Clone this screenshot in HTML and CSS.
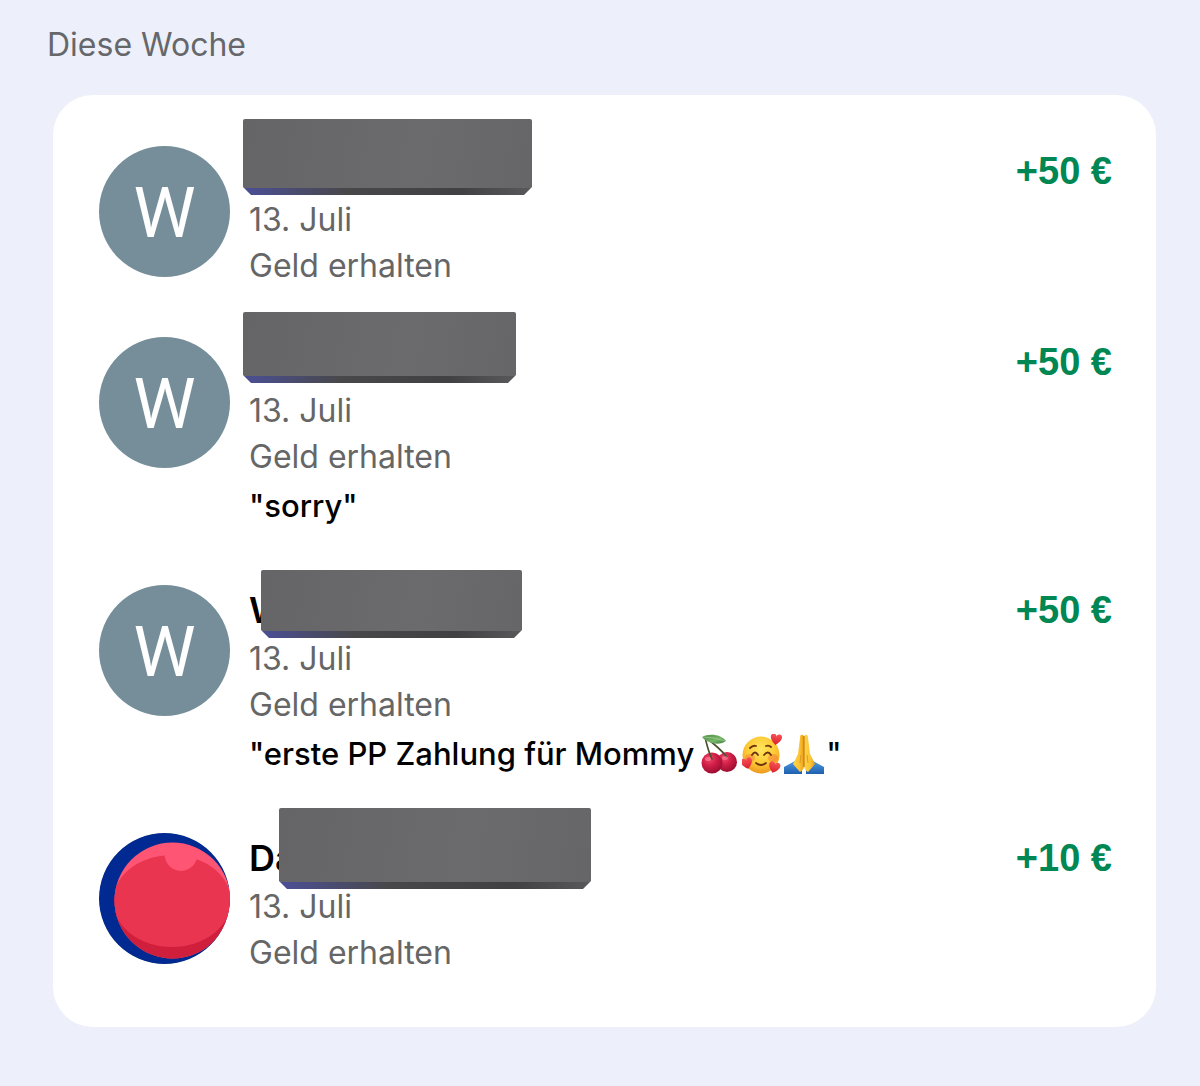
FILE: index.html
```html
<!DOCTYPE html>
<html lang="de">
<head>
<meta charset="utf-8">
<meta name="viewport" content="width=device-width, initial-scale=1">
<title>Aktivitäten</title>
<link rel="stylesheet" href="styles.css">
</head>
<body>
<main class="page">
  <h1 class="heading">Diese Woche</h1>
  <ul class="card">
    <li class="row">
      <div class="avatar">W</div>
      <div class="details">
        <div class="name"><span class="cover cover-a"></span></div>
        <div class="meta">13. Juli</div>
        <div class="meta">Geld erhalten</div>
      </div>
      <div class="amount">+50 €</div>
    </li>
    <li class="row">
      <div class="avatar">W</div>
      <div class="details">
        <div class="name"><span class="cover cover-b"></span></div>
        <div class="meta">13. Juli</div>
        <div class="meta">Geld erhalten</div>
        <div class="note">"sorry"</div>
      </div>
      <div class="amount">+50 €</div>
    </li>
    <li class="row">
      <div class="avatar">W</div>
      <div class="details">
        <div class="name">W<span class="cover cover-c"></span></div>
        <div class="meta">13. Juli</div>
        <div class="meta">Geld erhalten</div>
        <div class="note"><span>"erste PP Zahlung für Mommy</span>
          <span class="emojis">
            <svg class="emoji" viewBox="0 0 40 40" role="img" aria-label="Kirschen">
              <defs>
                <radialGradient id="cherry" cx=".38" cy=".3" r=".7"><stop offset="0" stop-color="#f0466a"/><stop offset=".5" stop-color="#cf1d45"/><stop offset="1" stop-color="#9c0f32"/></radialGradient>
                <linearGradient id="leaf" x2="1" y2="1"><stop offset="0" stop-color="#4c8a44"/><stop offset=".6" stop-color="#76b768"/><stop offset="1" stop-color="#3d7a3a"/></linearGradient>
              </defs>
              <circle cx="27" cy="28" r="10" fill="url(#cherry)"/>
              <circle cx="12" cy="29" r="10.500" fill="url(#cherry)"/>
              <path d="M5 3C7 12 9 19 12 25M5 3C13 9 22 17 27 23" fill="none" stroke="#47502a" stroke-width="1.600" stroke-linecap="round"/>
              <path d="M2 3C9-1 21 0 26 7C21 11 9 11 2 3Z" fill="url(#leaf)"/>
              <path d="M3 3Q14 3 25 7" fill="none" stroke="#a7d19b" stroke-width=".7"/>
              <ellipse cx="8" cy="25" rx="3" ry="2" fill="#ff8ca2" opacity=".6"/>
              <ellipse cx="25" cy="24" rx="3" ry="2" fill="#ff8ca2" opacity=".5"/>
            </svg>
            <svg class="emoji" viewBox="0 0 40 40" role="img" aria-label="Lächelndes Gesicht mit Herzen">
              <defs>
                <radialGradient id="face" cx=".5" cy=".35" r=".65"><stop offset="0" stop-color="#ffe65c"/><stop offset=".6" stop-color="#fdc935"/><stop offset="1" stop-color="#ee981e"/></radialGradient>
                <linearGradient id="heart" x2="0" y2="1"><stop offset="0" stop-color="#f75255"/><stop offset="1" stop-color="#d9202e"/></linearGradient>
                <path id="heart-shape" d="M0 5C-8-1-6-6-3-6C-1-6 0-5 0-3C0-5 1-6 3-6C6-6 8-1 0 5Z"/>
              </defs>
              <circle cx="19" cy="21" r="18.500" fill="url(#face)"/>
              <ellipse cx="8" cy="24" rx="5" ry="4" fill="#f47a3a" opacity=".5"/>
              <ellipse cx="31" cy="24" rx="5" ry="4" fill="#f47a3a" opacity=".5"/>
              <g fill="none" stroke="#6b3410" stroke-width="1.800" stroke-linecap="round">
                <path d="M8 14Q11 11 14 12M24 12Q27 11 29 13"/>
                <path d="M10 21Q13 16 16 21M22 21Q26 16 29 21"/>
                <path d="M14 29Q19 33 24 29"/>
              </g>
              <g fill="url(#heart)">
                <use href="#heart-shape" transform="translate(34 6) rotate(8)"/>
                <use href="#heart-shape" transform="translate(5 30) rotate(-14)"/>
                <use href="#heart-shape" transform="translate(32 34) rotate(16)"/>
              </g>
            </svg>
            <svg class="emoji" viewBox="0 0 40 40" role="img" aria-label="Gefaltete Hände">
              <defs>
                <linearGradient id="hand"><stop offset="0" stop-color="#ffd44d"/><stop offset=".6" stop-color="#fbc331"/><stop offset="1" stop-color="#e89b1b"/></linearGradient>
                <linearGradient id="sleeve" x2="0" y2="1"><stop offset="0" stop-color="#4c9be4"/><stop offset="1" stop-color="#1f5fae"/></linearGradient>
              </defs>
              <path d="M0 33L11 27L18 36V40H0Z" fill="url(#sleeve)"/>
              <path d="M40 33L29 27L22 36V40H40Z" fill="url(#sleeve)"/>
              <path d="M20 2C18 0 16 0 16 4L14 20L9 30L16 38Q20 36 20 31Z" fill="url(#hand)"/>
              <path d="M20 2C22 0 24 0 24 4L26 20L31 30L24 38Q20 36 20 31Z" fill="url(#hand)"/>
              <path d="M20 2V33" stroke="#c77d12" stroke-width="1.200" fill="none"/>
              <path d="M17 21L16 29M23 21L24 29" stroke="#df9a22" stroke-width="1" fill="none"/>
            </svg>
          </span><span>"</span></div>
      </div>
      <div class="amount">+50 €</div>
    </li>
    <li class="row">
      <svg class="avatar" viewBox="0 0 131 131" role="img" aria-label="Profilbild">
        <defs>
          <clipPath id="disc"><circle cx="65.500" cy="65.500" r="65.500"/></clipPath>
          <clipPath id="ball"><circle cx="73.500" cy="67.500" r="58"/></clipPath>
        </defs>
        <g clip-path="url(#disc)">
          <rect width="131" height="131" fill="#002991"/>
          <g clip-path="url(#ball)">
            <rect width="140" height="131" fill="#ff5574"/>
            <path d="M0 65H140V131H0Z" fill="#cf1f3c"/>
            <ellipse cx="73" cy="68" rx="59" ry="46" fill="#e9354f"/>
            <path d="M66 18A16 16 0 0 0 98 25Q90 16 66 15Z" fill="#ff5574"/>
          </g>
        </g>
      </svg>
      <div class="details">
        <div class="name">Da<span class="cover cover-d"></span></div>
        <div class="meta">13. Juli</div>
        <div class="meta">Geld erhalten</div>
      </div>
      <div class="amount">+10 €</div>
    </li>
  </ul>
</main>
</body>
</html>
```
FILE: styles.css
```css
* { box-sizing: border-box; }

body {
  margin: 0;
  background: #edf0fa;
  color: #000;
  font-family: Inter, "Liberation Sans", sans-serif;
  font-size: 32px;
}

.page { padding: 22px 44px 59px 47px; }

.heading {
  margin: 0 0 27px;
  color: #66676a;
  font-size: 32px;
  font-weight: 430;
  line-height: 46px;
}

.card {
  display: flex;
  flex-direction: column;
  gap: 48px;
  margin: 0 0 0 6px;
  padding: 51px 44px 51px 46px;
  border-radius: 40px;
  background: #fff;
  list-style: none;
}

.row {
  display: flex;
  align-items: flex-start;
}

.avatar {
  display: flex;
  flex: none;
  align-items: center;
  justify-content: center;
  width: 131px;
  height: 131px;
  margin-right: 19px;
  border-radius: 50%;
  background: #768e9a;
  color: #fff;
  font-family: Roboto, sans-serif;
  font-size: 70px;
  font-weight: 400;
  line-height: 131px;
}

div.avatar { padding-top: 3px; }

.details { flex: 1; }

.name {
  position: relative;
  height: 51px;
  font-size: 36px;
  font-weight: 600;
  line-height: 51px;
}

.meta {
  color: #666;
  font-weight: 430;
  line-height: 46px;
}

.note {
  display: flex;
  align-items: center;
  height: 57px;
  padding-bottom: 6px;
  font-size: 31px;
  font-weight: 500;
}

.emojis {
  display: flex;
  gap: 2px;
  margin: 0 2px 0 6px;
}

.emoji {
  width: 40px;
  height: 40px;
}

.amount {
  color: #008753;
  font-family: "Liberation Sans", Arial, sans-serif;
  font-size: 38px;
  font-weight: 700;
  line-height: 51px;
}

/* Blocks that hide the sender's name */
.cover {
  position: absolute;
  border-radius: 2px;
  background:
    linear-gradient(90deg, #4b4f96, #48484b 35%, #414143 75%, #59595b) bottom / 100% 7px no-repeat,
    linear-gradient(100deg, #656567, #6b6b6d 60%, #666668);
  clip-path: polygon(0 0, 100% 0, 100% calc(100% - 8px), calc(100% - 8px) 100%, 8px 100%, 0 calc(100% - 8px));
}

.cover-a { top: -27px; left: -6px; width: 289px; height: 76px; }
.cover-b { top: -25px; left: -6px; width: 273px; height: 71px; }
.cover-c { top: -15px; left: 12px; width: 261px; height: 68px; }
.cover-d { top: -25px; left: 30px; width: 312px; height: 81px; }
```
